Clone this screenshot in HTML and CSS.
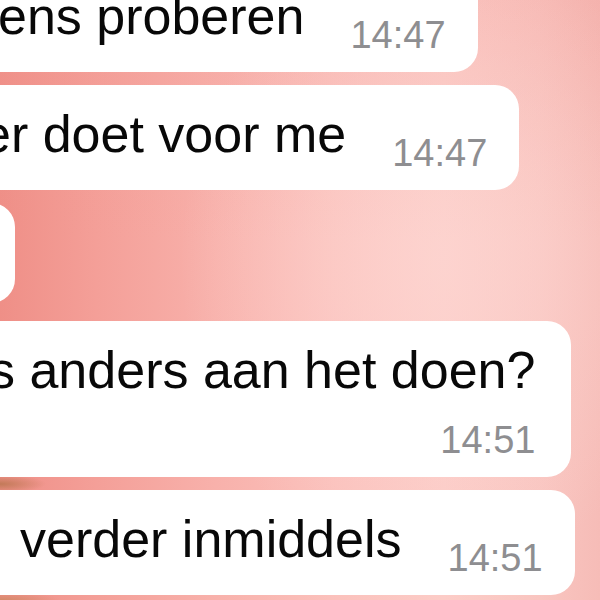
FILE: index.html
```html
<!doctype html>
<html lang="nl">

<head>
	<title>Chat</title>
	<meta charset="utf-8">
	<meta name="viewport" content="width=device-width, initial-scale=1.0">
	<link rel="stylesheet" href="styles.css">
</head>

<body>
	<div class="chat">
		<div class="bubble b-proberen">
			<span class="text">ens proberen</span>
			<span class="time">14:47</span>
		</div>
		<div class="bubble b-voor">
			<span class="text">er doet voor me</span>
			<span class="time">14:47</span>
		</div>
		<div class="bubble b-stub"></div>
		<div class="bubble stack b-anders">
			<span class="text">s anders aan het doen?</span>
			<span class="time">14:51</span>
		</div>
		<div class="bubble b-verder">
			<span class="text">verder inmiddels</span>
			<span class="time">14:51</span>
		</div>
	</div>
</body>

</html>
```

FILE: styles.css
```css
html
{
	margin: 0;
	padding: 0;
}

body
{
	margin: 0;
	padding: 0;
	width: 600px;
	height: 600px;
	overflow: hidden;
	font-family: "Liberation Sans", Arial, sans-serif;
	background:
		radial-gradient(ellipse 46px 9px at 0 484px, #c27a58 0%, rgba(200, 130, 100, 0) 100%),
		radial-gradient(ellipse 60px 8px at 0 600px, #d48a6a 0%, rgba(212, 138, 106, 0) 100%),
		radial-gradient(ellipse 260px 320px at 440px 260px, rgba(253, 214, 210, 0.7) 0%, rgba(253, 214, 210, 0) 100%),
		linear-gradient(180deg, rgba(240, 150, 145, 0.25) 0%, rgba(240, 150, 145, 0) 40%),
		linear-gradient(90deg, #ef8f87 0%, #f49f98 16%, #f8b1ab 36%, #fbc1bc 56%, #fcccc7 74%, #f9c5c0 90%, #f6bcb7 100%);
}

.chat
{
	display: flex;
	flex-direction: column;
	align-items: flex-start;
	gap: 13px;
	margin-top: -33px;
}

.bubble
{
	display: flex;
	align-items: flex-end;
	margin-left: -60px;
	padding: 18px 34px 16px 0;
	background: #ffffff;
	border-radius: 24px;
	white-space: nowrap;
}

.bubble.stack
{
	flex-direction: column;
	align-items: flex-end;
}

.text
{
	font-size: 52px;
	line-height: 62px;
	margin-bottom: 9px;
	color: #080808;
	align-self: flex-start;
}

.time
{
	font-size: 38px;
	line-height: 42px;
	margin-left: 46px;
	color: #8e8e91;
}

.stack .time
{
	margin-top: 9px;
	margin-left: 0;
}

.b-proberen
{
	padding-left: 58px;
	padding-right: 32px;
}

.b-voor
{
	padding-left: 42px;
	padding-right: 32px;
}

.b-stub
{
	width: 75px;
	height: 100px;
	padding: 0;
	margin-bottom: 5px;
}

.b-anders
{
	padding-left: 49px;
	padding-right: 36px;
}

.b-verder
{
	padding-left: 80px;
	padding-right: 32px;
}
```
